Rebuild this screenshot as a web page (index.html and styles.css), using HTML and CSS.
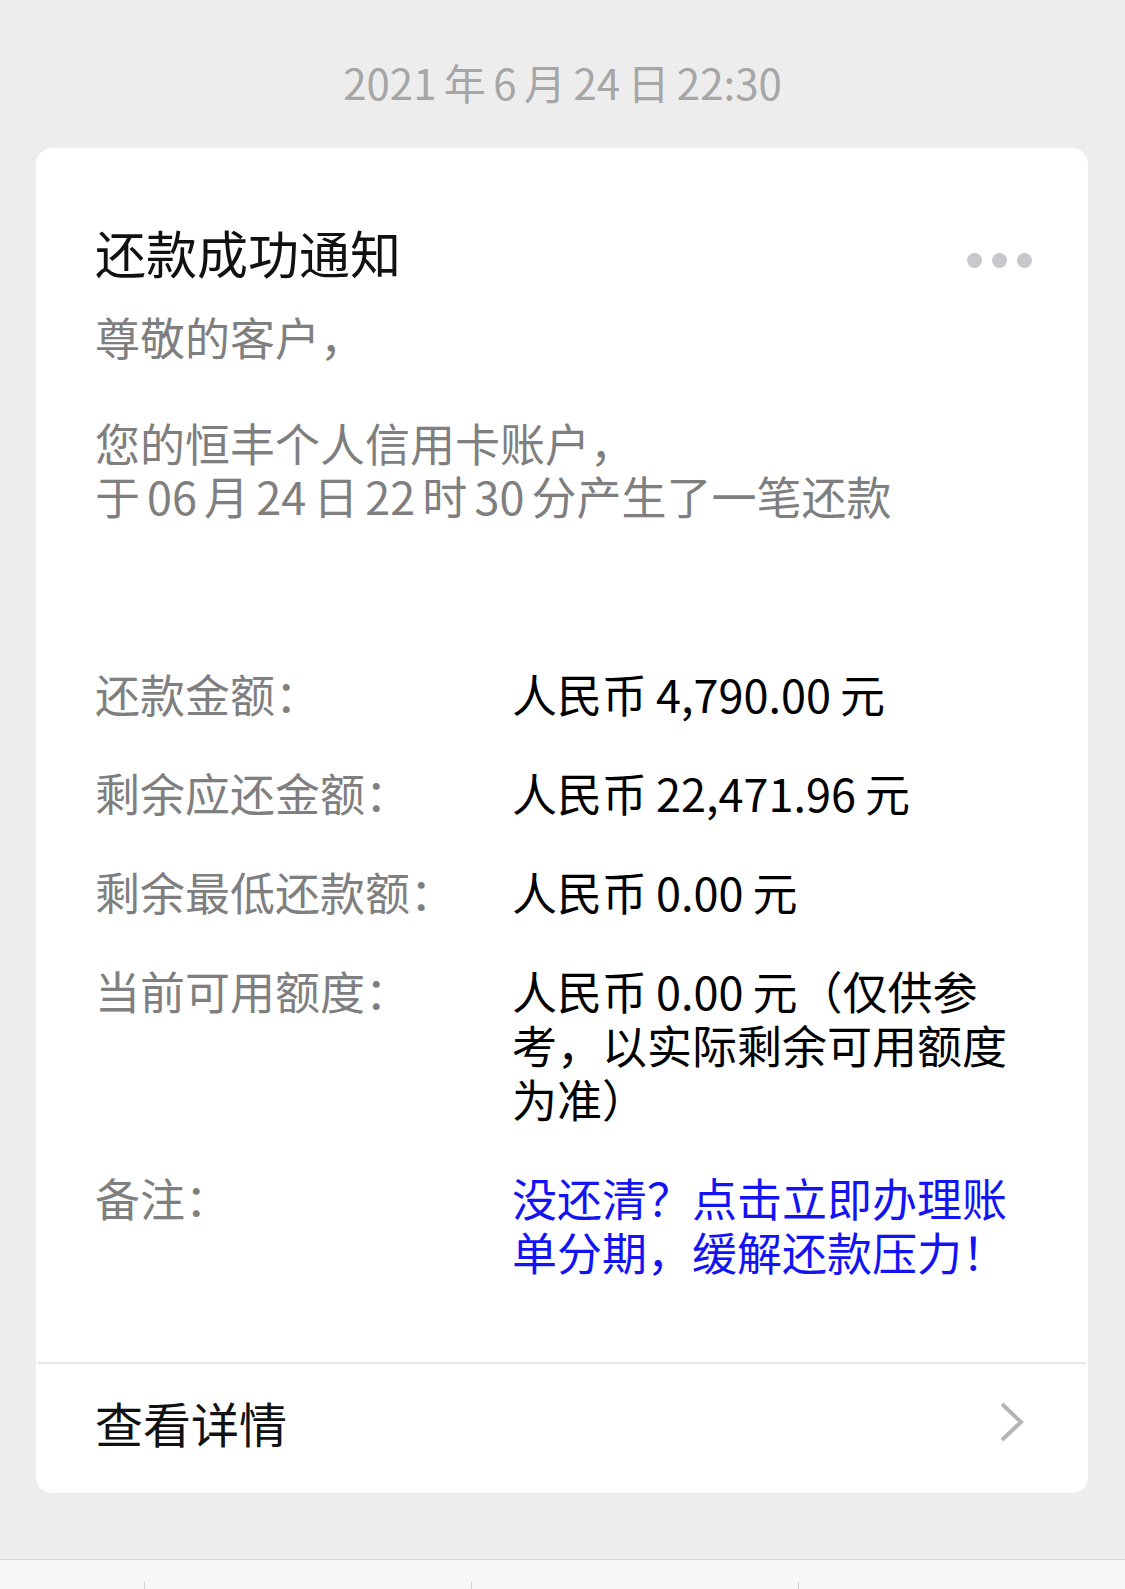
FILE: index.html
```html
<!DOCTYPE html>
<html lang="zh-CN">
<head>
<meta charset="utf-8">
<title>还款成功通知</title>
<link rel="stylesheet" href="styles.css">
</head>
<body>
<div class="time">2021 年 6 月 24 日 22:30</div>
<div class="card">
  <div class="main">
    <div class="head">
      <div class="title">还款成功通知</div>
      <div class="dots"><span></span><span></span><span></span></div>
    </div>
    <div class="greet">
      <div>尊敬的客户，</div>
      <div class="blank">&nbsp;</div>
      <div>您的恒丰个人信用卡账户，</div>
      <div>于 06 月 24 日 22 时 30 分产生了一笔还款</div>
    </div>
    <div class="rows">
      <div class="row"><div class="label">还款金额：</div><div class="value">人民币 4,790.00 元</div></div>
      <div class="row"><div class="label">剩余应还金额：</div><div class="value">人民币 22,471.96 元</div></div>
      <div class="row"><div class="label">剩余最低还款额：</div><div class="value">人民币 0.00 元</div></div>
      <div class="row"><div class="label">当前可用额度：</div><div class="value">人民币 0.00 元（仅供参考，以实际剩余可用额度为准）</div></div>
      <div class="row"><div class="label">备注：</div><div class="value link">没还清？点击立即办理账单分期，缓解还款压力！</div></div>
    </div>
  </div>
  <div class="foot">
    <div class="foot-text">查看详情</div>
    <svg class="chev" width="26" height="42" viewBox="0 0 26 42"><polyline points="3,3 22,21 3,39" fill="none" stroke="#b4b4b4" stroke-width="4"/></svg>
  </div>
</div>
<div class="bar">
  <div class="cell"></div>
  <div class="cell sep"></div>
  <div class="cell sep"></div>
  <div class="cell sep"></div>
</div>
</body>
</html>
```
FILE: styles.css
```css
html, body {
  margin: 0;
  padding: 0;
}
body {
  width: 1125px;
  height: 1589px;
  overflow: hidden;
  background: #ededed;
  font-family: "Noto Sans CJK SC", "Noto Sans", sans-serif;
  display: flex;
  flex-direction: column;
}
.time {
  padding-top: 57px;
  height: 50px;
  line-height: 50px;
  font-size: 42px;
  color: #a6a6a6;
  text-align: center;
  word-spacing: -2px;
}
.card {
  margin: 41px 37px 0 36px;
  background: #ffffff;
  border-radius: 16px;
}
.main {
  padding: 74px 56px 83px 59px;
}
.head {
  display: flex;
  justify-content: space-between;
}
.title {
  font-size: 51px;
  line-height: 60px;
  color: #111111;
}
.dots {
  display: flex;
  gap: 10px;
  margin-top: 31px;
  height: 15px;
}
.dots span {
  width: 15px;
  height: 15px;
  border-radius: 50%;
  background: #c8c8cc;
}
.greet {
  margin-top: 28px;
  font-size: 45px;
  line-height: 53px;
  color: #7f7f7f;
  word-spacing: -3px;
}
.rows {
  margin-top: 145px;
  display: flex;
  flex-direction: column;
  gap: 45px;
}
.row {
  display: flex;
  font-size: 45px;
  line-height: 54px;
}
.label {
  flex: none;
  width: 417px;
  color: #7f7f7f;
}
.value {
  flex: 1;
  color: #000000;
  word-spacing: -1px;
}
.value.link {
  color: #1414f2;
}
.foot {
  margin: 0 2px;
  border-top: 2px solid #e6e6e6;
  display: flex;
  justify-content: space-between;
  align-items: center;
  padding: 33px 61px 46px 57px;
}
.foot-text {
  font-size: 48px;
  line-height: 50px;
  color: #111111;
}
.chev {
  display: block;
}
.bar {
  margin-top: 66px;
  flex: 1;
  border-top: 1px solid #d6d6d6;
  background: #f7f7f7;
  display: grid;
  grid-template-columns: 144px repeat(3, 1fr);
}
.cell {
  margin-top: 22px;
}
.cell.sep {
  border-left: 1px solid #cfcfcf;
}
```
